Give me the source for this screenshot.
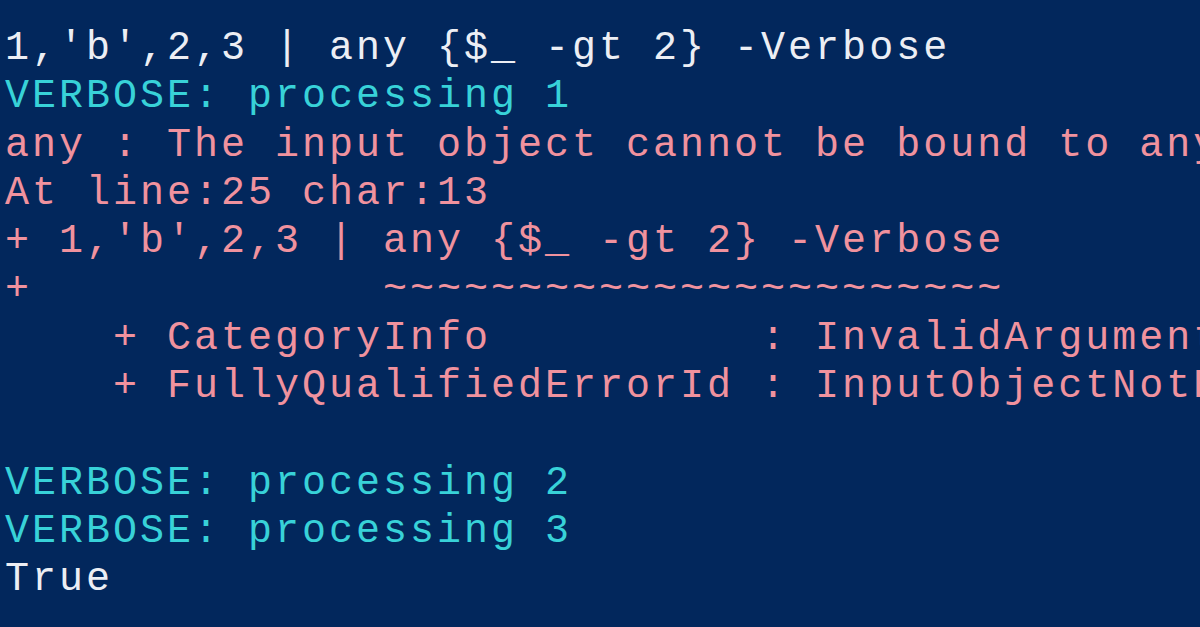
import React from 'react';

type Line = {
  text: string;
  kind: 'cmd' | 'verbose' | 'error' | 'out' | 'blank';
};

const lines: Line[] = [
  { text: "1,'b',2,3 | any {$_ -gt 2} -Verbose", kind: 'cmd' },
  { text: 'VERBOSE: processing 1', kind: 'verbose' },
  { text: 'any : The input object cannot be bound to any parameters for the command', kind: 'error' },
  { text: 'At line:25 char:13', kind: 'error' },
  { text: "+ 1,'b',2,3 | any {$_ -gt 2} -Verbose", kind: 'error' },
  { text: '+             ~~~~~~~~~~~~~~~~~~~~~~~', kind: 'error' },
  { text: '    + CategoryInfo          : InvalidArgument: (b:String) [Any], ParameterBindingException', kind: 'error' },
  { text: '    + FullyQualifiedErrorId : InputObjectNotBound,Any', kind: 'error' },
  { text: '', kind: 'blank' },
  { text: 'VERBOSE: processing 2', kind: 'verbose' },
  { text: 'VERBOSE: processing 3', kind: 'verbose' },
  { text: 'True', kind: 'out' },
];

const colorFor = (kind: Line['kind']) => {
  if (kind === 'verbose') return 'text-[#38d2d8]';
  if (kind === 'error') return 'text-[#f0929e]';
  return 'text-[#eceef4]';
};

const App: React.FC = () => {
  return (
    <div className="w-[1200px] h-[627px] overflow-hidden bg-[#02275c]">
      <div
        className="pt-[25px] pl-[5px] text-[40px] leading-[48.3px] tracking-[3px]"
        style={{ fontFamily: '"Liberation Mono", "DejaVu Sans Mono", monospace' }}
      >
        {lines.map((line, i) => (
          <div key={i} className={`h-[48.3px] whitespace-pre ${colorFor(line.kind)}`}>
            {line.text}
          </div>
        ))}
      </div>
    </div>
  );
};

export default App;
